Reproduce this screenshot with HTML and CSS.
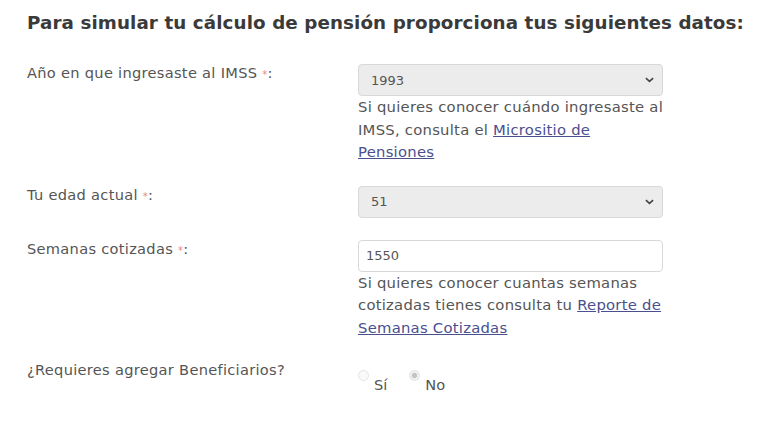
FILE: index.html
```html
<!DOCTYPE html>
<html lang="es">
<head>
<meta charset="utf-8">
<link rel="stylesheet" href="styles.css">
</head>
<body>
<div class="page">
  <h1 class="title">Para simular tu cálculo de pensión proporciona tus siguientes datos:</h1>
  <div class="form">
    <label class="label">Año en que ingresaste al IMSS <span class="req">*</span>:</label>
    <div class="field">
      <div class="select"><span>1993</span><svg class="chev" viewBox="0 0 10 6" width="9" height="6"><path d="M1 1l4 3.5L9 1" fill="none" stroke="#444" stroke-width="1.8"/></svg></div>
      <p class="help">Si quieres conocer cuándo ingresaste al IMSS, consulta el <a href="#">Micrositio de Pensiones</a></p>
    </div>

    <label class="label">Tu edad actual <span class="req">*</span>:</label>
    <div class="field">
      <div class="select"><span>51</span><svg class="chev" viewBox="0 0 10 6" width="9" height="6"><path d="M1 1l4 3.5L9 1" fill="none" stroke="#444" stroke-width="1.8"/></svg></div>
    </div>

    <label class="label">Semanas cotizadas <span class="req">*</span>:</label>
    <div class="field">
      <div class="input">1550</div>
      <p class="help">Si quieres conocer cuantas semanas cotizadas tienes consulta tu <a href="#">Reporte de Semanas Cotizadas</a></p>
    </div>

    <label class="label">¿Requieres agregar Beneficiarios?</label>
    <div class="field radios">
      <span class="opt"><span class="radio"></span><span class="rtext">Sí</span></span>
      <span class="opt"><span class="radio checked"></span><span class="rtext">No</span></span>
    </div>
  </div>
</div>
</body>
</html>
```

FILE: styles.css
```css
html, body {
  margin: 0;
  padding: 0;
  background: #fff;
}
body {
  font-family: "DejaVu Sans", "Noto Sans", sans-serif;
  color: #555;
}
.page {
  padding: 11px 0 0 27px;
}
.title {
  margin: 0;
  font-size: 18.3px;
  font-weight: 700;
  color: #3a3a3a;
  line-height: 24px;
  letter-spacing: 0.1px;
}
.form {
  margin-top: 29px;
  display: grid;
  grid-template-columns: 331px 305px;
  row-gap: 22px;
}
.label {
  font-size: 14.6px;
  line-height: 18px;
  letter-spacing: 0.3px;
  padding-top: 0;
  color: #555;
}
.req {
  color: #e08a8a;
  font-size: 10px;
}
.field {
  display: flex;
  flex-direction: column;
}
.select {
  height: 30px;
  border: 1px solid #d8d8d8;
  border-radius: 4px;
  background: #ececec;
  display: flex;
  align-items: center;
  justify-content: space-between;
  padding: 0 8px 0 12px;
  font-size: 13px;
  color: #555;
}
.input {
  height: 30px;
  border: 1px solid #d8d8d8;
  border-radius: 4px;
  background: #fff;
  display: flex;
  align-items: center;
  padding: 0 7px;
  font-size: 13px;
  color: #555;
}
.help {
  margin: 0;
  font-size: 14.8px;
  line-height: 22.5px;
  letter-spacing: 0.25px;
  color: #555;
}
.help a {
  color: #4a4f8f;
  text-decoration: underline;
}
.radios {
  flex-direction: row;
  gap: 22px;
  padding-top: 8px;
}
.opt {
  display: flex;
  align-items: flex-start;
  gap: 5px;
  font-size: 14.6px;
}
.radio {
  width: 9px;
  height: 9px;
  border-radius: 50%;
  border: 1px solid #e4e4e4;
  background: #fafafa;
  margin-top: 1px;
}
.radio.checked {
  background: radial-gradient(circle, #c4c4c4 0 40%, #f0f0f0 45%);
}
.rtext {
  padding-top: 7px;
}
```
